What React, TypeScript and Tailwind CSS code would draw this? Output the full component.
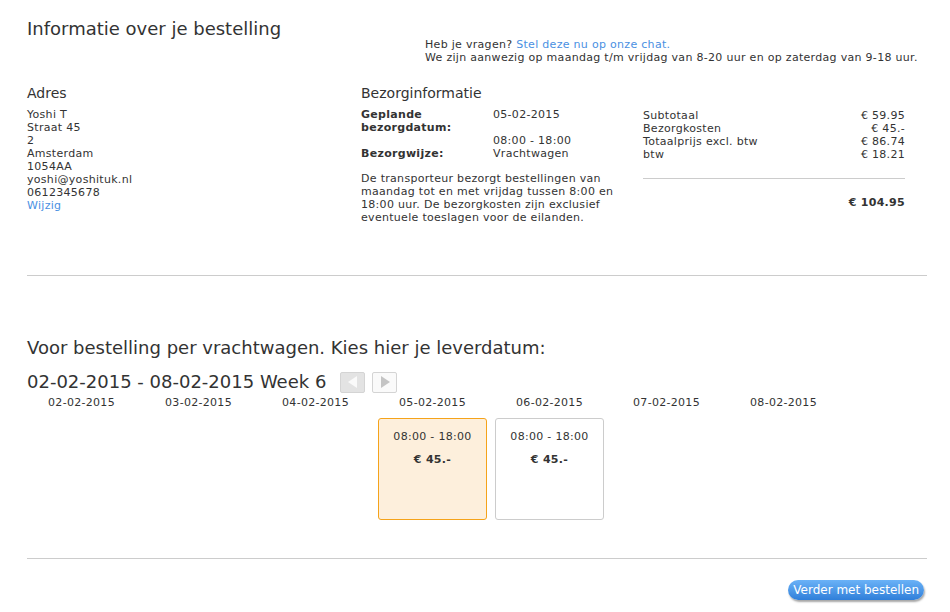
const days = [
  "02-02-2015",
  "03-02-2015",
  "04-02-2015",
  "05-02-2015",
  "06-02-2015",
  "07-02-2015",
  "08-02-2015",
];

// index -> slot info (only thursday & friday have a delivery slot)
const slots: Record<number, { time: string; price: string; selected: boolean }> = {
  3: { time: "08:00 - 18:00", price: "€ 45.-", selected: true },
  4: { time: "08:00 - 18:00", price: "€ 45.-", selected: false },
};

const totals = [
  ["Subtotaal", "€ 59.95"],
  ["Bezorgkosten", "€ 45.-"],
  ["Totaalprijs excl. btw", "€ 86.74"],
  ["btw", "€ 18.21"],
];

export default function App() {
  return (
    <div className="w-[950px] h-[612px] bg-white font-['DejaVu_Sans',Verdana,sans-serif] text-[11px] leading-[13px] tracking-[0.3px] text-[#333]">
      <div className="pl-[27px] pr-[23px]">
        <h1 className="pt-[18px] text-[18px] leading-[22px] tracking-normal text-[#333]">
          Informatie over je bestelling
        </h1>
        <div className="pl-[398px] mt-[-2px]">
          <div>
            Heb je vragen? <a className="text-[#4a90e2]">Stel deze nu op onze chat.</a>
          </div>
          <div>We zijn aanwezig op maandag t/m vrijdag van 8-20 uur en op zaterdag van 9-18 uur.</div>
        </div>

        <div className="flex pt-[20px]">
          <div className="w-[334px]">
            <h2 className="text-[14px] leading-[18px] tracking-normal">Adres</h2>
            <div className="pt-[6px]">
              <div>Yoshi T</div>
              <div>Straat 45</div>
              <div>2</div>
              <div>Amsterdam</div>
              <div>1054AA</div>
              <div>yoshi@yoshituk.nl</div>
              <div>0612345678</div>
              <a className="text-[#4a90e2]">Wijzig</a>
            </div>
          </div>

          <div className="w-[282px]">
            <h2 className="text-[14px] leading-[18px] tracking-normal">Bezorginformatie</h2>
            <div className="pt-[6px]">
              <div className="flex">
                <div className="w-[132px] font-bold">
                  Geplande
                  <br />
                  bezorgdatum:
                </div>
                <div>
                  05-02-2015
                  <br />
                  <br />
                  08:00 - 18:00
                </div>
              </div>
              <div className="flex">
                <div className="w-[132px] font-bold">Bezorgwijze:</div>
                <div>Vrachtwagen</div>
              </div>
              <p className="pt-[12px] w-[262px]">
                De transporteur bezorgt bestellingen van maandag tot en met vrijdag tussen 8:00 en
                18:00 uur. De bezorgkosten zijn exclusief eventuele toeslagen voor de eilanden.
              </p>
            </div>
          </div>

          <div className="w-[262px] pt-[25px]">
            {totals.map(([label, value]) => (
              <div key={label} className="flex justify-between">
                <span>{label}</span>
                <span>{value}</span>
              </div>
            ))}
            <div className="mt-[17px] border-t border-[#ccc]" />
            <div className="pt-[17px] text-right font-bold">€ 104.95</div>
          </div>
        </div>

        <div className="mt-[51px] border-t border-[#ccc]" />

        <h2 className="pt-[61px] text-[18px] leading-[22px] tracking-normal">
          Voor bestelling per vrachtwagen. Kies hier je leverdatum:
        </h2>
        <div className="flex items-center gap-[7px] pt-[12px]">
          <span className="text-[18px] leading-[22px] tracking-normal">02-02-2015 - 08-02-2015 Week 6</span>
          <div className="flex gap-[7px] ml-[7px]">
            <button className="flex h-[21px] w-[25px] items-center justify-center rounded-[2px] border border-[#d4d4d4] bg-[#e3e3e3]">
              <svg width="10" height="12" viewBox="0 0 10 12">
                <path d="M9 0 L9 12 L0 6 Z" fill="#fafafa" />
              </svg>
            </button>
            <button className="flex h-[21px] w-[25px] items-center justify-center rounded-[2px] border border-[#d4d4d4] bg-[#fafafa]">
              <svg width="10" height="12" viewBox="0 0 10 12">
                <path d="M1 0 L1 12 L10 6 Z" fill="#c4c4c4" />
              </svg>
            </button>
          </div>
        </div>

        <div className="flex gap-[8px] pt-[3px]">
          {days.map((day, i) => {
            const slot = slots[i];
            return (
              <div key={day} className="w-[109px]">
                <div className="text-center leading-[14px]">{day}</div>
                {slot && (
                  <div
                    className={
                      slot.selected
                        ? "mt-[8px] h-[102px] rounded-[3px] border border-[#f5a31a] bg-[#fdefdc] text-center"
                        : "mt-[8px] h-[102px] rounded-[3px] border border-[#ccc] bg-white text-center"
                    }
                  >
                    <div className="pt-[11px]">{slot.time}</div>
                    <div className="pt-[10px] font-bold">{slot.price}</div>
                  </div>
                )}
              </div>
            );
          })}
        </div>

        <div className="mt-[38px] border-t border-[#ccc]" />

        <div className="flex justify-end pt-[21px] pr-[3px]">
          <button className="h-[20px] rounded-full bg-gradient-to-b from-[#6ab2f7] to-[#2f7fd9] px-[5px] text-[12px] leading-[18px] tracking-normal text-white shadow-[1px_2px_2px_rgba(0,0,0,0.35)]">
            Verder met bestellen
          </button>
        </div>
      </div>
    </div>
  );
}
